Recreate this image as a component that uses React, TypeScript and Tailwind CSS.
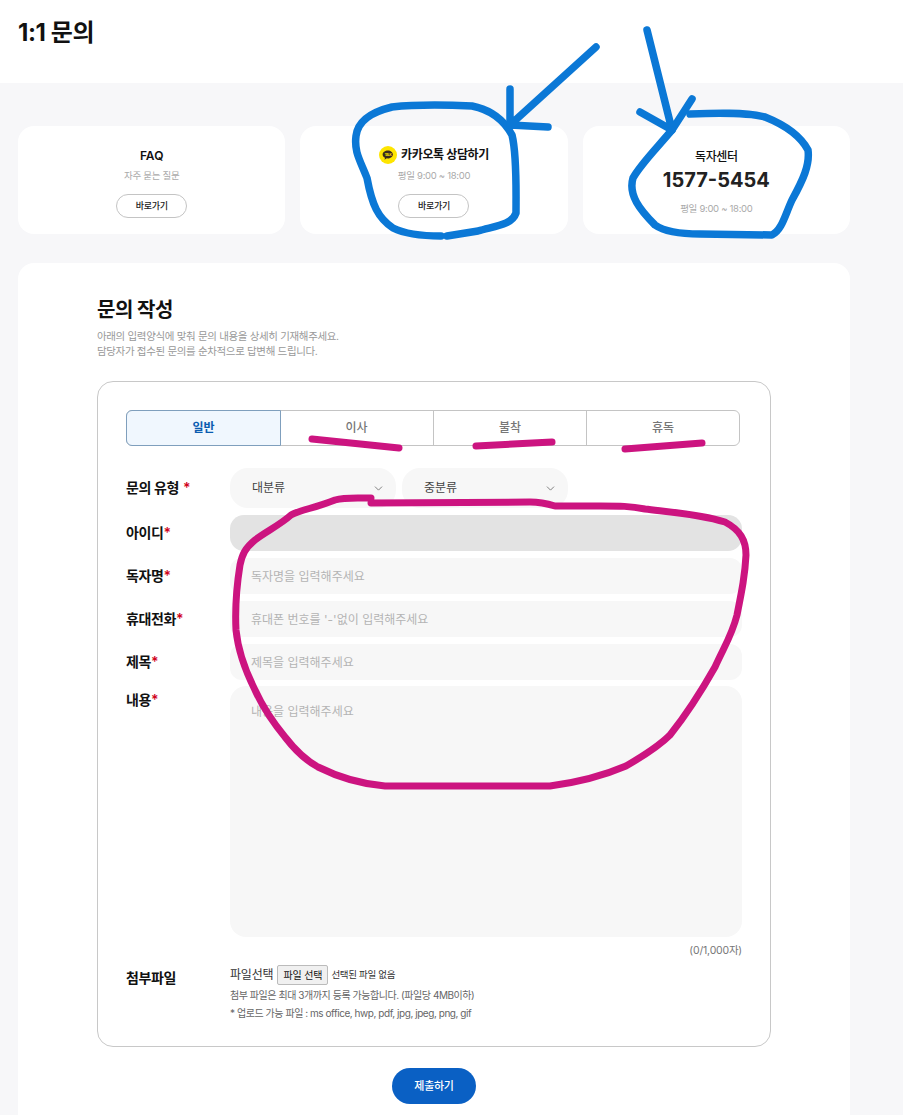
import { ChevronDown } from "lucide-react";

const FONT = "[font-family:Inter,'Noto_Sans_CJK_KR',sans-serif]";

function KakaoIcon() {
  return (
    <svg width="18" height="18" viewBox="0 0 18 18" className="shrink-0">
      <circle cx="9" cy="9" r="9" fill="#fee500" />
      <path d="M9 4.4c-3 0-5.4 1.8-5.4 4 0 1.4 1 2.7 2.4 3.4l-.5 2 2.3-1.5c.2 0 .5.1.7.1 3 0 5.4-1.8 5.4-4s-2.4-4-4.9-4z" fill="#3a2a1e" />
      <text x="9" y="9.8" textAnchor="middle" fontSize="3.2" fontWeight="700" fill="#fee500">TALK</text>
    </svg>
  );
}

function GoButton() {
  return (
    <button className="w-[71px] h-[24px] rounded-full border border-[#c4c4c4] bg-white text-[9px] font-medium text-[#222] tracking-[-0.3px]">
      바로가기
    </button>
  );
}

function Label({ text, gap }: { text: string; gap?: boolean }) {
  return (
    <span className="block -mt-[2px] text-[14px] font-semibold text-[#111] tracking-[-0.4px]">
      {text}
      <span className={gap ? "ml-1 text-[#d0021b]" : "text-[#d0021b]"}>*</span>
    </span>
  );
}

function Select({ text }: { text: string }) {
  return (
    <div className="w-[166px] h-[40px] rounded-[18px] bg-[#f7f7f7] flex items-center justify-between pl-[22px] pr-[11px] text-[12px] text-[#444]">
      {text}
      <ChevronDown className="w-[13px] h-[13px] text-[#666]" strokeWidth={1.5} />
    </div>
  );
}

function Field({ label, placeholder }: { label: string; placeholder: string }) {
  return (
    <div className="flex items-center mt-[7px]">
      <div className="w-[104px]">
        <Label text={label} />
      </div>
      <input
        readOnly
        placeholder={placeholder}
        className="flex-1 h-[36px] rounded-[12px] bg-[#f7f7f7] pl-[21px] text-[12px] outline-none placeholder:text-[#b4b4b4]"
      />
    </div>
  );
}

function Annotations() {
  return (
    <svg width="903" height="1115" viewBox="0 0 903 1115" fill="none" strokeLinecap="round" strokeLinejoin="round" className="absolute left-0 top-0 pointer-events-none">
      <g stroke="#0b78d6" strokeWidth="7.5">
        <path d="M441 236 C420 236 405 234 393 228 C378 218 372 205 367 178 C360 160 354 152 356 136 C358 120 372 112 392 107 C420 104 450 105 472 106 C492 110 505 122 512 135 C517 155 516 190 516 213 C512 225 495 226 478 231 L447 236" />
        <path d="M596 47 L510 125 M510 89 L510 125 L548 127" />
        <path d="M647 30 L672 130 M640 112 L672 130 L692 99" />
        <path d="M672 130 C655 150 640 165 633 178 C628 195 640 210 655 225 C665 232 680 234 700 234 L772 235 C782 230 785 215 792 200 C803 180 810 165 808 150 C800 135 785 125 765 117 C745 112 715 113 690 114" />
      </g>
      <g stroke="#cc1480" strokeWidth="7">
        <path d="M312 439 L399 448 M476 446 L552 442 M625 449 L702 443" />
        <path d="M371 498 C355 498 345 497 335 500 C315 508 300 510 291 515 C280 525 265 532 255 540 C245 548 242 555 240 565 C236 590 235 610 236 630 C238 650 245 670 255 690 C265 712 275 725 285 737 C295 750 305 760 318 767 C340 778 360 784 385 786 L550 786 C580 782 605 775 626 766 C645 755 660 745 670 735 C690 710 702 690 715 667 C725 645 732 635 737 615 C742 590 745 575 746 555 C746 540 740 530 725 522 C700 514 670 512 645 509 C630 506 620 506 600 506 L555 506 C545 503 540 502 530 502 L371 503" />
      </g>
    </svg>
  );
}

export default function App() {
  return (
    <div className={`relative w-[903px] h-[1115px] overflow-hidden bg-[#f7f7f9] ${FONT}`}>
      <header className="h-[83px] bg-white pl-[18px] pt-[15px]">
        <h1 className="text-[24px] font-bold text-[#111] tracking-[-0.4px] leading-[36px]">1:1 문의</h1>
      </header>

      <div className="w-[832px] ml-[18px] pt-[43px]">
        <div className="grid grid-cols-3 gap-[15px] text-center">
          <div className="h-[108px] rounded-[16px] bg-white flex flex-col items-center pt-[21px]">
            <div className="text-[12px] font-semibold text-[#111] leading-[18px]">FAQ</div>
            <div className="text-[9.5px] text-[#aaa] leading-[14px] mt-[4px] tracking-[-0.3px]">자주 묻는 질문</div>
            <div className="mt-[8px]"><GoButton /></div>
          </div>
          <div className="h-[108px] rounded-[16px] bg-white flex flex-col items-center pt-[20px]">
            <div className="flex items-center gap-[4px] text-[12px] font-semibold text-[#111] leading-[18px] tracking-[-0.4px]">
              <KakaoIcon />
              카카오톡 상담하기
            </div>
            <div className="text-[9.5px] text-[#aaa] leading-[14px] mt-[5px] tracking-[-0.3px]">평일 9:00 ~ 18:00</div>
            <div className="mt-[8px]"><GoButton /></div>
          </div>
          <div className="h-[108px] rounded-[16px] bg-white flex flex-col items-center pt-[22px]">
            <div className="text-[12px] font-medium text-[#111] leading-[18px] tracking-[-0.4px]">독자센터</div>
            <div className="text-[20px] font-bold text-[#222] leading-[28px]">1577-5454</div>
            <div className="text-[9.5px] text-[#aaa] leading-[14px] mt-[8px] tracking-[-0.3px]">평일 9:00 ~ 18:00</div>
          </div>
        </div>

        <main className="mt-[29px] rounded-t-[16px] bg-white h-[860px] px-[79px] pt-[32px]">
          <h2 className="text-[20px] font-bold text-[#111] leading-[30px] tracking-[-0.5px]">문의 작성</h2>
          <p className="mt-[4px] text-[10.5px] leading-[15px] text-[#999] tracking-[-0.35px]">
            아래의 입력양식에 맞춰 문의 내용을 상세히 기재해주세요.
            <br />
            담당자가 접수된 문의를 순차적으로 답변해 드립니다.
          </p>

          <section className="mt-[22px] h-[666px] rounded-[16px] border border-[#c8c8c8] pl-[28px] pr-[28px] pt-[28px]">
            <div className="w-[614px] h-[36px] grid grid-cols-4 rounded-[6px] border border-[#c4c4c4] text-[12px] font-medium text-[#777] text-center leading-[33px]">
              <div className="-m-px rounded-l-[6px] border border-[#7f9fbd] bg-[#f0f7fe] font-semibold text-[#0a5cb0]">일반</div>
              <div>이사</div>
              <div className="border-l border-[#c4c4c4]">불착</div>
              <div className="border-l border-[#c4c4c4]">휴독</div>
            </div>

            <div className="flex items-center mt-[22px]">
              <div className="w-[104px]">
                <Label text="문의 유형" gap />
              </div>
              <div className="flex gap-[6px]">
                <Select text="대분류" />
                <Select text="중분류" />
              </div>
            </div>

            <div className="flex items-center mt-[7px]">
              <div className="w-[104px]">
                <Label text="아이디" />
              </div>
              <div className="flex-1 h-[36px] rounded-[14px] bg-[#e3e3e3]" />
            </div>
            <Field label="독자명" placeholder="독자명을 입력해주세요" />
            <Field label="휴대전화" placeholder="휴대폰 번호를 '-'없이 입력해주세요" />
            <Field label="제목" placeholder="제목을 입력해주세요" />

            <div className="flex items-start mt-[6px]">
              <div className="w-[104px] pt-[5px]">
                <Label text="내용" />
              </div>
              <div className="flex-1 h-[251px] rounded-[16px] bg-[#f7f7f7] pl-[21px] pt-[17px] text-[12px] text-[#b4b4b4]">
                내용을 입력해주세요
              </div>
            </div>
            <div className="mt-[7px] text-right text-[10.5px] leading-[14px] text-[#777] tracking-[-0.2px]">(0/1,000자)</div>

            <div className="flex items-start mt-[7px]">
              <div className="w-[104px] pt-[2px] text-[14px] font-semibold text-[#111] tracking-[-0.4px]">첨부파일</div>
              <div>
                <div className="flex items-center h-[20px] text-[12px] text-[#333] tracking-[-0.2px]">
                  파일선택
                  <span className="ml-[4px] w-[51px] h-[20px] border border-[#bbb] rounded-[2px] bg-[#f0f0f0] text-[10px] leading-[18px] text-center text-[#111]">파일 선택</span>
                  <span className="ml-[3px] text-[9.5px] text-[#333] tracking-[-0.3px]">선택된 파일 없음</span>
                </div>
                <div className="mt-[1px] text-[10px] leading-[18px] text-[#666] tracking-[-0.45px]">
                  첨부 파일은 최대 3개까지 등록 가능합니다. (파일당 4MB이하)
                  <br />* 업로드 가능 파일 : ms office, hwp, pdf, jpg, jpeg, png, gif
                </div>
              </div>
            </div>
          </section>

          <div className="flex justify-center mt-[21px]">
            <button className="w-[84px] h-[36px] rounded-full bg-[#0a60c4] text-[11px] font-medium text-white tracking-[-0.3px]">제출하기</button>
          </div>
        </main>
      </div>

      <Annotations />
    </div>
  );
}
